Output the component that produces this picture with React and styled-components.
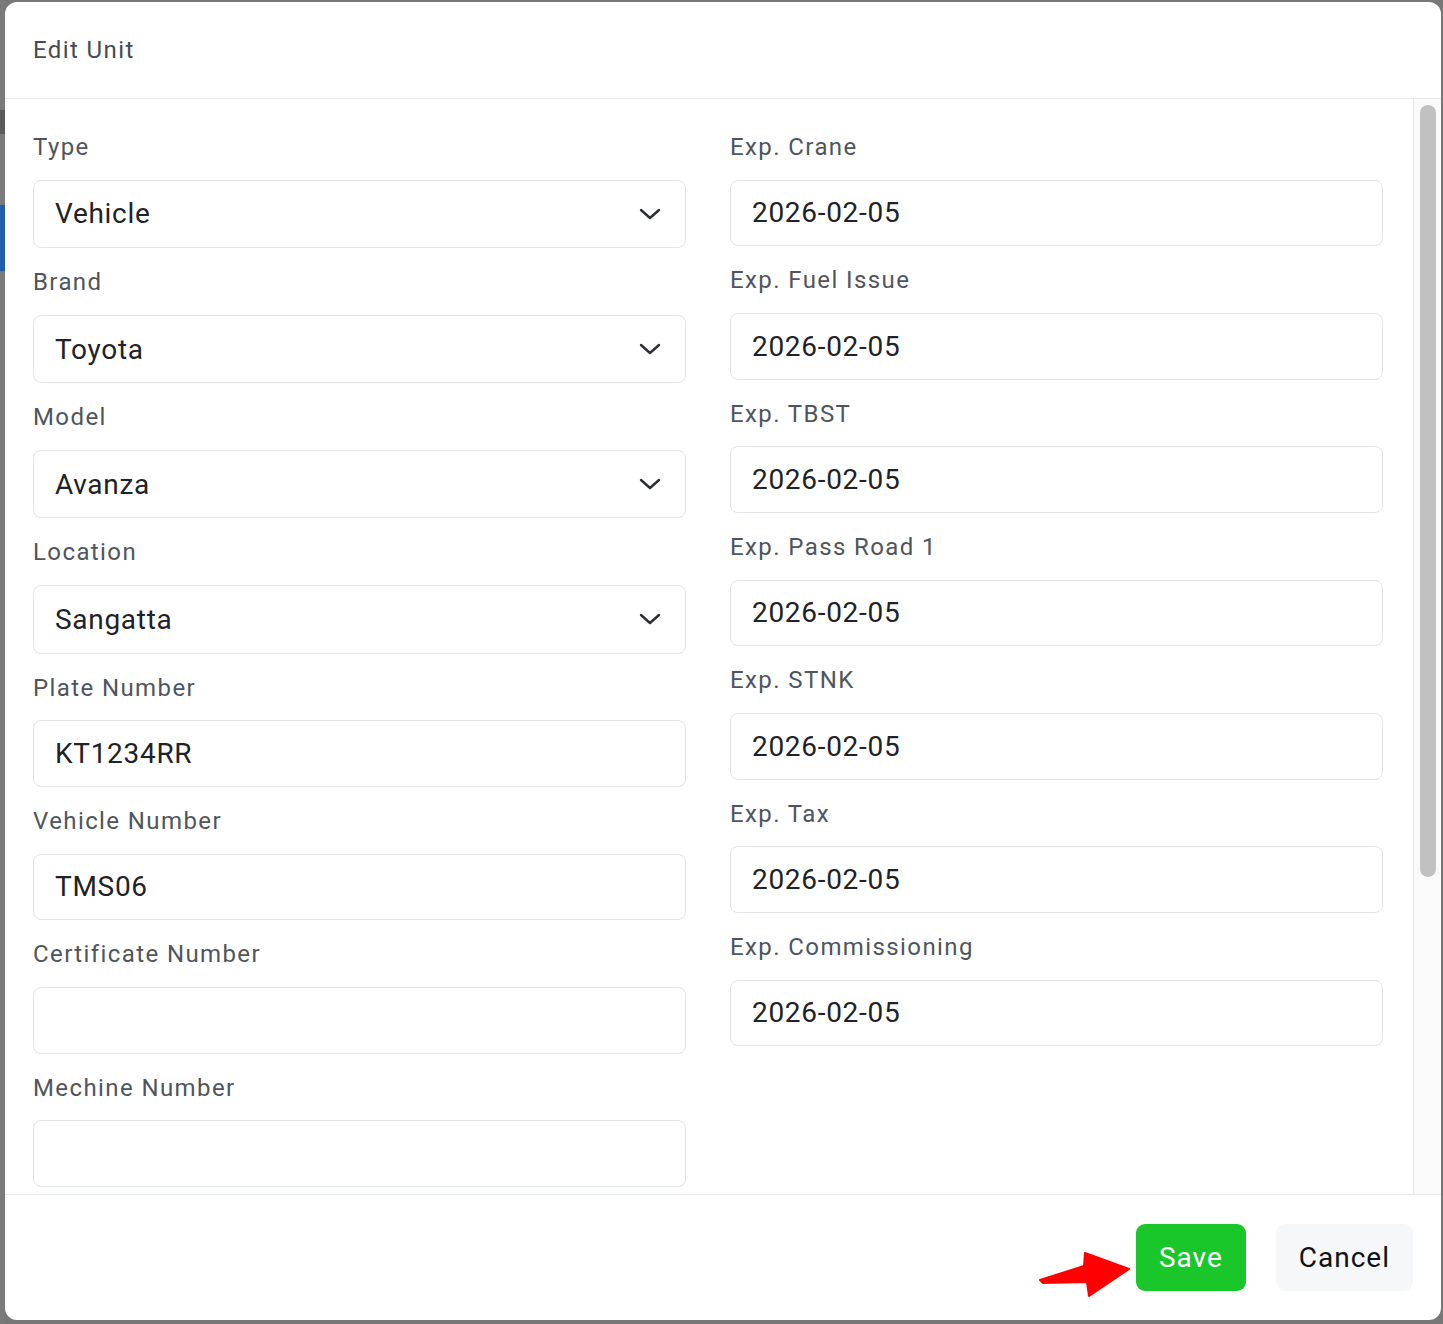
import React from "react";
import styled, { createGlobalStyle } from "styled-components";

const Global = createGlobalStyle`
  html, body { margin: 0; padding: 0; }
  body { font-family: Roboto, "Liberation Sans", Arial, sans-serif; background: #777; }
  * { box-sizing: border-box; }
`;

const Backdrop = styled.div`
  position: relative;
  width: 1443px;
  height: 1324px;
  background: #777777;
  padding: 2px 2px 4px 5px;
  display: flex;
  overflow: hidden;
`;

const PageBlock = styled.div`
  position: absolute;
  left: 0;
  top: ${(p) => p.$top}px;
  width: 5px;
  height: ${(p) => p.$h}px;
  background: ${(p) => p.$color};
`;

const Modal = styled.div`
  position: relative;
  flex: 1;
  background: #fff;
  border-radius: 12px;
  display: flex;
  flex-direction: column;
  overflow: hidden;
`;

const Header = styled.div`
  height: 97px;
  flex: none;
  display: flex;
  align-items: center;
  padding-left: 28px;
  border-bottom: 1px solid #e6e8eb;
  font-size: 24px;
  letter-spacing: 1.4px;
  color: #464b52;
`;

const Body = styled.div`
  flex: 1;
  min-height: 0;
  display: flex;
`;

const ScrollArea = styled.div`
  flex: 1;
  overflow: hidden;
  padding: 14px 30px 0 28px;
`;

const Track = styled.div`
  width: 28px;
  flex: none;
  background: #fafafa;
  border-left: 1px solid #e8e8e8;
  padding: 6px 5px 0 6px;
`;

const Thumb = styled.div`
  height: 772px;
  border-radius: 8px;
  background: #c1c1c1;
`;

const Grid = styled.div`
  display: grid;
  grid-template-columns: 653px 653px;
  column-gap: 44px;
  align-items: start;
`;

const Column = styled.div`
  display: flex;
  flex-direction: column;
`;

const Label = styled.div`
  height: 66.67px;
  padding-top: 17px;
  line-height: 34px;
  font-size: 24px;
  letter-spacing: 1.4px;
  color: #50555c;
`;

const InputBox = styled.div`
  height: ${(p) => (p.$select ? 68.5 : 66.67)}px;
  border: 1.5px solid #e1e4e8;
  border-radius: 8px;
  display: flex;
  align-items: center;
  justify-content: space-between;
  padding: 0 24px 0 21px;
  font-size: 28px;
  letter-spacing: 0.7px;
  color: #1f2226;
`;

const Chevron = () => (
  <svg width="22" height="12" viewBox="0 0 22 12" fill="none">
    <path d="M2 2 L11 10 L20 2" stroke="#2b2e33" strokeWidth="2.4" strokeLinecap="round" strokeLinejoin="round" />
  </svg>
);

const Footer = styled.div`
  height: 126px;
  flex: none;
  border-top: 1px solid #e6e8eb;
  display: flex;
  align-items: center;
  justify-content: flex-end;
  gap: 30px;
  padding: 0 28px 0 0;
`;

const Button = styled.button`
  height: 67px;
  padding: 0 23px;
  border: none;
  border-radius: 9px;
  font-family: Roboto, "Liberation Sans", Arial, sans-serif;
  font-size: 28px;
  letter-spacing: 1px;
  background: ${(p) => (p.$primary ? "#19c72a" : "#f6f7f9")};
  color: ${(p) => (p.$primary ? "#ffffff" : "#111111")};
`;

const Arrow = styled.svg`
  position: absolute;
  left: 1030px;
  top: 1245px;
`;

const Field = ({ label, value, select }) => (
  <>
    <Label>{label}</Label>
    <InputBox $select={select}>
      <span>{value}</span>
      {select && <Chevron />}
    </InputBox>
  </>
);

const left = [
  ["Type", "Vehicle", true],
  ["Brand", "Toyota", true],
  ["Model", "Avanza", true],
  ["Location", "Sangatta", true],
  ["Plate Number", "KT1234RR"],
  ["Vehicle Number", "TMS06"],
  ["Certificate Number", ""],
  ["Mechine Number", ""],
];

const right = [
  "Exp. Crane",
  "Exp. Fuel Issue",
  "Exp. TBST",
  "Exp. Pass Road 1",
  "Exp. STNK",
  "Exp. Tax",
  "Exp. Commissioning",
];

export default function App() {
  return (
    <>
      <Global />
      <Backdrop>
        <PageBlock $top={0} $h={1324} $color="#7a7a7a" />
        <PageBlock $top={205} $h={66} $color="#1f5fa8" />
        <PageBlock $top={110} $h={24} $color="#5a5a5a" />
        <Modal>
          <Header>Edit Unit</Header>
          <Body>
            <ScrollArea>
              <Grid>
                <Column>
                  {left.map(([l, v, s]) => (
                    <Field key={l} label={l} value={v} select={s} />
                  ))}
                </Column>
                <Column>
                  {right.map((l) => (
                    <Field key={l} label={l} value="2026-02-05" />
                  ))}
                </Column>
              </Grid>
            </ScrollArea>
            <Track>
              <Thumb />
            </Track>
          </Body>
          <Footer>
            <Button $primary>Save</Button>
            <Button>Cancel</Button>
          </Footer>
        </Modal>
        <Arrow width="110" height="60" viewBox="0 0 110 60">
          <path
            d="M10 35 L54 21 L55 8 L99 24 L59 51 L57 37 L13 38 Z"
            fill="#ff0000"
            stroke="#ff0000"
            strokeWidth="2"
            strokeLinejoin="round"
          />
        </Arrow>
      </Backdrop>
    </>
  );
}
